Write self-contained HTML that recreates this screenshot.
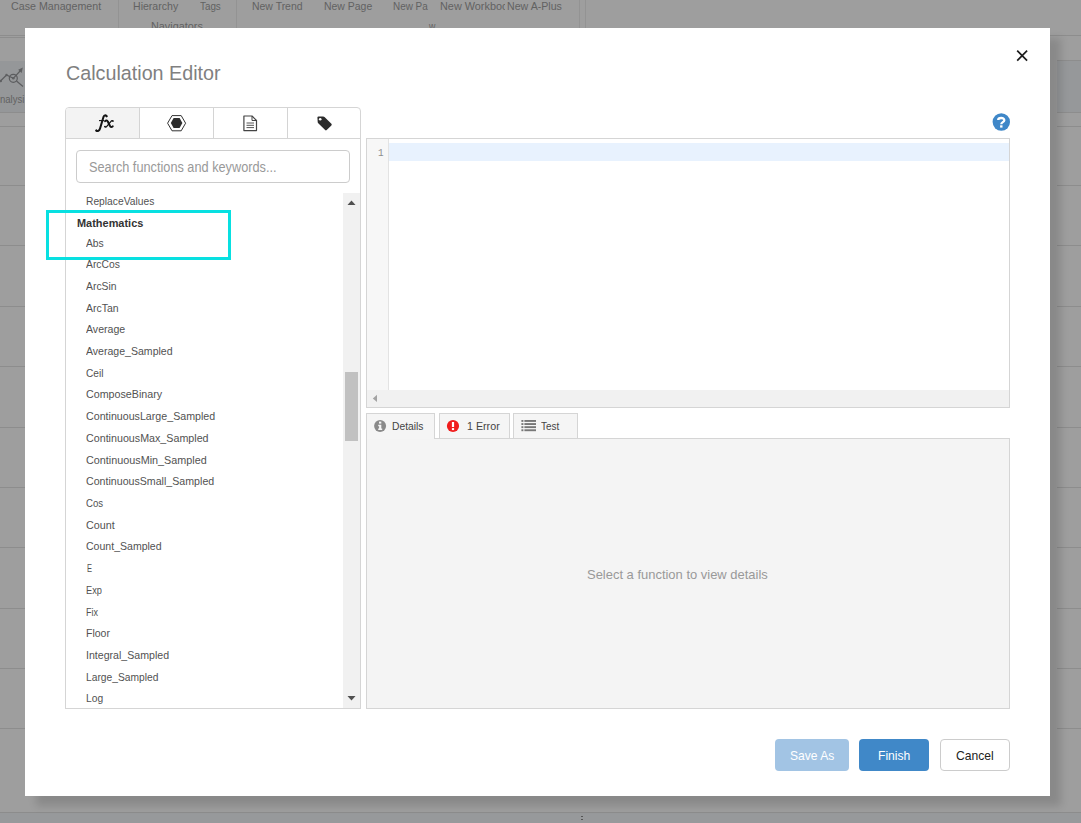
<!DOCTYPE html>
<html>
<head>
<meta charset="utf-8">
<title>Calculation Editor</title>
<style>
html,body{margin:0;padding:0;}
body{width:1081px;height:823px;overflow:hidden;background:#9e9e9e;font-family:"Liberation Sans",sans-serif;position:relative;}
.a{position:absolute;}
.t{position:absolute;white-space:nowrap;line-height:normal;transform-origin:0 0;}
.vl{position:absolute;width:1px;background:#939393;top:0;height:28px;}
.hl{position:absolute;height:1px;background:#8d8d8d;}
#modal{position:absolute;left:25px;top:28px;width:1025px;height:768px;background:#fff;box-shadow:11px 10px 8px 0 rgba(0,0,0,.135);}
.bd{border:1px solid #d5d5d5;box-sizing:border-box;}
</style>
</head>
<body>
<!-- dimmed background application -->
<div class="a" style="left:0;top:61px;width:25px;height:51px;background:#959799;"></div>
<div class="a" style="left:1057px;top:60px;width:24px;height:52px;background:#96989a;"></div>
<div class="a" style="left:0;top:813px;width:1081px;height:10px;background:#97999b;"></div>
<div class="vl" style="left:118px;"></div>
<div class="vl" style="left:236px;"></div>
<div class="vl" style="left:579px;"></div>
<div class="vl" style="left:585px;"></div>
<div class="hl" style="left:0;top:35px;width:25px;"></div><div class="hl" style="left:1050px;top:35px;width:31px;"></div>
<div class="hl" style="left:0;top:37px;width:25px;"></div>
<div class="hl" style="left:1057px;top:60px;width:24px;"></div>
<div class="hl" style="left:0;top:112px;width:25px;"></div><div class="hl" style="left:1057px;top:112px;width:24px;"></div>
<div class="hl" style="left:0;top:126px;width:25px;"></div><div class="hl" style="left:1057px;top:126px;width:24px;"></div>
<div class="hl" style="left:0;top:185px;width:25px;"></div><div class="hl" style="left:1057px;top:185px;width:24px;"></div>
<div class="hl" style="left:0;top:245px;width:25px;"></div><div class="hl" style="left:1057px;top:245px;width:24px;"></div>
<div class="hl" style="left:0;top:306px;width:25px;"></div><div class="hl" style="left:1057px;top:306px;width:24px;"></div>
<div class="hl" style="left:0;top:366px;width:25px;"></div><div class="hl" style="left:1057px;top:366px;width:24px;"></div>
<div class="hl" style="left:0;top:427px;width:25px;"></div><div class="hl" style="left:1057px;top:427px;width:24px;"></div>
<div class="hl" style="left:0;top:487px;width:25px;"></div><div class="hl" style="left:1057px;top:487px;width:24px;"></div>
<div class="hl" style="left:0;top:547px;width:25px;"></div><div class="hl" style="left:1057px;top:547px;width:24px;"></div>
<div class="hl" style="left:0;top:608px;width:25px;"></div><div class="hl" style="left:1057px;top:608px;width:24px;"></div>
<div class="hl" style="left:0;top:668px;width:25px;"></div><div class="hl" style="left:1057px;top:668px;width:24px;"></div>
<div class="hl" style="left:0;top:728px;width:25px;"></div><div class="hl" style="left:1057px;top:728px;width:24px;"></div>
<div class="hl" style="left:0;top:812px;width:1081px;background:#8c8c8c;"></div>
<div class="a" style="left:581px;top:816px;width:2px;height:1px;background:#555;"></div>
<div class="a" style="left:581px;top:819px;width:2px;height:1px;background:#555;"></div>
<div class="t" style='left:11.10px;top:-0.40px;font-size:11.3px;color:#626262;transform:scaleX(0.9448);'>Case Management</div>
<div class="t" style='left:133.00px;top:-0.40px;font-size:11.3px;color:#626262;transform:scaleX(0.9347);'>Hierarchy</div>
<div class="t" style='left:199.60px;top:-0.40px;font-size:11.3px;color:#626262;transform:scaleX(0.8708);'>Tags</div>
<div class="t" style='left:150.50px;top:19.60px;font-size:11.3px;color:#626262;transform:scaleX(0.9593);'>Navigators</div>
<div class="t" style='left:252.30px;top:-0.40px;font-size:11.3px;color:#626262;transform:scaleX(0.9255);'>New Trend</div>
<div class="t" style='left:324.40px;top:-0.40px;font-size:11.3px;color:#626262;transform:scaleX(0.9250);'>New Page</div>
<div class="t" style='left:393.30px;top:-0.40px;font-size:11.3px;color:#626262;transform:scaleX(0.8775);'>New Pa</div>
<div class="t" style='left:439.50px;top:-0.40px;font-size:11.3px;color:#626262;transform:scaleX(0.9615);'>New Workbo<span style="position:absolute;left:100%;">ok</span></div>
<div class="a" style="left:505px;top:0;width:70px;height:28px;background:#9e9e9e;"></div>
<div class="t" style='left:507.00px;top:-0.40px;font-size:11.3px;color:#626262;transform:scaleX(0.9407);'>New A-Plus</div>
<div class="t" style='left:0.00px;top:92.80px;font-size:11.3px;color:#626262;transform:scaleX(0.8448);'>nalysi</div>
<div class="t" style='left:429.40px;top:20.20px;font-size:11.3px;color:#626262;transform:scaleX(0.7778);'>w</div>
<svg class="a" style="left:0;top:64px;" width="25" height="26" viewBox="0 64 25 26">
  <g fill="none" stroke="#5c5d5f" stroke-width="1.2">
    <polyline points="0.5,81 6.5,75 13.3,78.3 21,70"/>
    <circle cx="13.3" cy="78.3" r="4"/>
    <line x1="16.5" y1="81" x2="23" y2="86.5"/>
  </g>
  <g fill="#5f6062"><circle cx="6.5" cy="75" r="1.2"/><circle cx="13.3" cy="78.3" r="1.3"/><circle cx="0.8" cy="81" r="1.2"/><polygon points="22.8,67.6 18.2,69.8 21.6,73"/></g>
</svg>

<!-- modal -->
<div id="modal"></div>
<svg class="a" style="left:1014px;top:48px;" width="16" height="16" viewBox="0 0 16 16"><path d="M3.2 2.6 L13.1 12.7 M13.1 2.6 L3.2 12.7" stroke="#1c1c1c" stroke-width="1.7" fill="none"/></svg>

<!-- left tabs -->
<div class="a bd" style="left:65px;top:107px;width:296px;height:32px;border-radius:4px 4px 0 0;background:#fff;"></div>
<div class="a" style="left:66px;top:108px;width:73px;height:30px;background:#f3f3f3;border-radius:3px 0 0 0;"></div>
<div class="a" style="left:139px;top:108px;width:1px;height:30px;background:#d4d4d4;"></div>
<div class="a" style="left:213px;top:108px;width:1px;height:30px;background:#d4d4d4;"></div>
<div class="a" style="left:287px;top:108px;width:1px;height:30px;background:#d4d4d4;"></div>
<!-- fx icon -->
<svg class="a" style="left:94px;top:113px;" width="22" height="21" viewBox="94 113 22 21">
  <g fill="none" stroke="#151515" stroke-linecap="round" stroke-linejoin="round">
    <path d="M106.6 116.3 C106.5 114.9 104.2 114.7 103.5 116.9 L100.0 128.6 C99.3 130.9 97.5 131.5 96.3 130.6" stroke-width="1.95"/>
    <path d="M99 120.6 H104.1" stroke-width="1.1" stroke-linecap="butt"/>
    <path d="M105.1 121.2 C106 120.1 107.3 120.2 107.8 121.5 L110 126 C110.5 127.3 111.7 127.4 112.7 126.3" stroke-width="2"/>
    <path d="M113 121.1 C112.4 120.3 111.7 120.5 111 121.3 L106.8 126.3 C106 127.3 105.3 127.3 104.8 126.6" stroke-width="1.25"/>
  </g>
  <g fill="#151515"><circle cx="106.5" cy="116.3" r="1"/><circle cx="96.4" cy="130.5" r="1"/><circle cx="112.9" cy="121.1" r="0.8"/><circle cx="105" cy="126.6" r="0.8"/></g>
</svg>
<!-- hexagon icon -->
<svg class="a" style="left:166px;top:114px;" width="22" height="18" viewBox="166 114 22 18">
  <polygon points="167.6,123.2 172,115.6 181.2,115.6 185.6,123.2 181.2,130.8 172,130.8" fill="none" stroke="#333" stroke-width="1"/>
  <polygon points="170.8,123.1 173.6,118.1 179.6,118.1 182.4,123.1 179.6,128.1 173.6,128.1" fill="#2e2e2e"/>
</svg>
<!-- file-text-o icon -->
<svg class="a" style="left:242px;top:114px;" width="17" height="19" viewBox="242 114 17 19">
  <path d="M243.9 116 H252 L256.5 120.5 V130.6 H243.9 Z" fill="none" stroke="#444" stroke-width="1.2" stroke-linejoin="round"/>
  <path d="M252 116 V120.5 H256.5" fill="none" stroke="#444" stroke-width="1"/>
  <path d="M246.5 123 H254 M246.5 125.3 H254 M246.5 127.6 H254" stroke="#555" stroke-width="1"/>
</svg>
<!-- tag icon -->
<svg class="a" style="left:315.5px;top:115.4px;" width="18" height="17" viewBox="315 115 18 17">
  <path d="M316.4 117.6 a1.2 1.2 0 0 1 1.2 -1.2 h4.6 a2 2 0 0 1 1.3 .55 l6.9 6.9 a1.1 1.1 0 0 1 0 1.55 l-4.7 4.7 a1.1 1.1 0 0 1 -1.55 0 l-6.9 -6.9 a2 2 0 0 1 -.55 -1.3 z" fill="#2b2b2b"/>
  <circle cx="319.2" cy="119.2" r="1.3" fill="#fff"/>
</svg>

<!-- left panel -->
<div class="a bd" style="left:65px;top:138px;width:296px;height:571px;background:#fff;"></div>
<div class="a" style="left:76px;top:150px;width:274px;height:33px;border:1px solid #ccc;border-radius:4px;box-sizing:border-box;background:#fff;"></div>
<!-- scrollbar -->
<div class="a" style="left:343px;top:193px;width:17px;height:515px;background:#f1f1f1;"></div>
<div class="a" style="left:345px;top:372px;width:13px;height:69px;background:#c1c1c1;"></div>
<svg class="a" style="left:347px;top:199.7px;" width="9" height="6"><polygon points="4.5,0.5 8.5,5 0.5,5" fill="#505050"/></svg>
<svg class="a" style="left:347px;top:695px;" width="9" height="6"><polygon points="0.5,1 8.5,1 4.5,5.5" fill="#505050"/></svg>

<!-- editor -->
<div class="a bd" style="left:366px;top:138px;width:644px;height:270px;background:#fff;"></div>
<div class="a" style="left:367px;top:139px;width:21px;height:251px;background:#f7f7f7;"></div>
<div class="a" style="left:388px;top:139px;width:1px;height:251px;background:#e3e3e3;"></div>
<div class="a" style="left:389px;top:143px;width:620px;height:18px;background:#e8f2fe;"></div>
<div class="a" style="left:367px;top:390px;width:642px;height:17px;background:#f1f1f1;"></div>
<svg class="a" style="left:372px;top:394px;" width="6" height="9"><polygon points="5,0.8 5,8 0.8,4.4" fill="#a3a3a3"/></svg>

<!-- help icon -->
<svg class="a" style="left:991px;top:112px;" width="20" height="20" viewBox="0 0 20 20">
  <circle cx="10.3" cy="10" r="8.7" fill="#3f87c8"/>
  <path d="M7.2 8.1 C7.2 5.4 13.3 5.2 13.3 8.2 C13.3 10.2 10.3 10.1 10.3 12.2" fill="none" stroke="#fff" stroke-width="2.3"/>
  <rect x="9.1" y="13.3" width="2.4" height="2.3" fill="#fff"/>
</svg>

<!-- bottom tabs / detail panel -->
<div class="a bd" style="left:366px;top:438px;width:644px;height:271px;background:#f4f4f4;"></div>
<div class="a bd" style="left:366px;top:413px;width:69px;height:26px;border-bottom:none;background:#f5f5f5;"></div>
<div class="a bd" style="left:439px;top:413px;width:71px;height:26px;background:#f5f5f5;"></div>
<div class="a bd" style="left:513px;top:413px;width:65px;height:26px;background:#f5f5f5;"></div>
<svg class="a" style="left:373px;top:419px;" width="14" height="14" viewBox="0 0 14 14">
  <circle cx="7.1" cy="7" r="6" fill="#8a8a8a"/>
  <rect x="6" y="2.6" width="2.3" height="2" fill="#f5f5f5"/>
  <path d="M5.2 5.8 H8.3 V9.6 H9.2 V11 H5.2 V9.6 H6.1 V7.2 H5.2 Z" fill="#f5f5f5"/>
</svg>
<svg class="a" style="left:446px;top:419px;" width="14" height="14" viewBox="0 0 14 14">
  <circle cx="7" cy="7" r="6.1" fill="#f01c1c"/>
  <rect x="5.9" y="3" width="2.2" height="5" fill="#fff"/>
  <rect x="5.9" y="9.1" width="2.2" height="2" fill="#fff"/>
</svg>
<svg class="a" style="left:521px;top:419px;" width="16" height="13" viewBox="0 0 16 13">
  <g fill="#777">
  <rect x="0.4" y="1" width="2" height="1.9"/><rect x="3.4" y="1" width="11.6" height="1.9"/>
  <rect x="0.4" y="4.1" width="2" height="1.9"/><rect x="3.4" y="4.1" width="11.6" height="1.9"/>
  <rect x="0.4" y="7.2" width="2" height="1.9"/><rect x="3.4" y="7.2" width="11.6" height="1.9"/>
  <rect x="0.4" y="10.3" width="2" height="1.9"/><rect x="3.4" y="10.3" width="11.6" height="1.9"/>
  </g>
</svg>

<!-- buttons -->
<div class="a" style="left:775px;top:739px;width:74px;height:32px;border-radius:4px;background:#a2c4e4;"></div>
<div class="a" style="left:859px;top:739px;width:70px;height:32px;border-radius:4px;background:#4088c8;"></div>
<div class="a" style="left:940px;top:739px;width:70px;height:32px;border-radius:4px;background:#fff;border:1px solid #ccc;box-sizing:border-box;"></div>

<div class="t" style='left:65.80px;top:61.00px;font-size:20.5px;color:#808080;transform:scaleX(0.9621);'>Calculation Editor</div>
<div class="t" style='left:89.30px;top:158.70px;font-size:14px;color:#999;transform:scaleX(0.9093);'>Search functions and keywords...</div>
<div class="t" style='left:86.35px;top:195.20px;font-size:11px;color:#525252;transform:scaleX(0.9329);'>ReplaceValues</div>
<div class="t" style='left:76.60px;top:217.40px;font-size:11px;color:#333;transform:scaleX(0.9955);font-weight:700;'>Mathematics</div>
<div class="t" style='left:86.30px;top:236.50px;font-size:11px;color:#525252;transform:scaleX(0.9368);'>Abs</div>
<div class="t" style='left:86.30px;top:258.21px;font-size:11px;color:#525252;transform:scaleX(0.9389);'>ArcCos</div>
<div class="t" style='left:86.30px;top:279.92px;font-size:11px;color:#525252;transform:scaleX(0.9437);'>ArcSin</div>
<div class="t" style='left:86.30px;top:301.63px;font-size:11px;color:#525252;transform:scaleX(0.9500);'>ArcTan</div>
<div class="t" style='left:86.30px;top:323.34px;font-size:11px;color:#525252;transform:scaleX(0.9610);'>Average</div>
<div class="t" style='left:86.30px;top:345.05px;font-size:11px;color:#525252;transform:scaleX(0.9589);'>Average_Sampled</div>
<div class="t" style='left:86.30px;top:366.76px;font-size:11px;color:#525252;transform:scaleX(0.9211);'>Ceil</div>
<div class="t" style='left:86.30px;top:388.47px;font-size:11px;color:#525252;transform:scaleX(0.9731);'>ComposeBinary</div>
<div class="t" style='left:86.30px;top:410.18px;font-size:11px;color:#525252;transform:scaleX(0.9692);'>ContinuousLarge_Sampled</div>
<div class="t" style='left:86.30px;top:431.89px;font-size:11px;color:#525252;transform:scaleX(0.9730);'>ContinuousMax_Sampled</div>
<div class="t" style='left:86.30px;top:453.60px;font-size:11px;color:#525252;transform:scaleX(0.9821);'>ContinuousMin_Sampled</div>
<div class="t" style='left:86.30px;top:475.31px;font-size:11px;color:#525252;transform:scaleX(0.9662);'>ContinuousSmall_Sampled</div>
<div class="t" style='left:86.30px;top:497.02px;font-size:11px;color:#525252;transform:scaleX(0.8750);'>Cos</div>
<div class="t" style='left:86.30px;top:518.73px;font-size:11px;color:#525252;transform:scaleX(0.9767);'>Count</div>
<div class="t" style='left:86.30px;top:540.44px;font-size:11px;color:#525252;transform:scaleX(0.9582);'>Count_Sampled</div>
<div class="t" style='left:86.80px;top:562.15px;font-size:11px;color:#525252;transform:scaleX(0.6857);'>E</div>
<div class="t" style='left:86.30px;top:583.86px;font-size:11px;color:#525252;transform:scaleX(0.8421);'>Exp</div>
<div class="t" style='left:86.30px;top:605.57px;font-size:11px;color:#525252;transform:scaleX(0.8200);'>Fix</div>
<div class="t" style='left:86.30px;top:627.28px;font-size:11px;color:#525252;transform:scaleX(0.9560);'>Floor</div>
<div class="t" style='left:86.30px;top:648.99px;font-size:11px;color:#525252;transform:scaleX(0.9640);'>Integral_Sampled</div>
<div class="t" style='left:86.30px;top:670.70px;font-size:11px;color:#525252;transform:scaleX(0.9321);'>Large_Sampled</div>
<div class="t" style='left:86.30px;top:692.41px;font-size:11px;color:#525252;transform:scaleX(0.9333);'>Log</div>
<div class="t" style='left:391.90px;top:420.00px;font-size:11.3px;color:#444;transform:scaleX(0.9114);'>Details</div>
<div class="t" style='left:466.55px;top:420.00px;font-size:11.3px;color:#444;transform:scaleX(0.9471);'>1 Error</div>
<div class="t" style='left:541.00px;top:419.90px;font-size:11.3px;color:#444;transform:scaleX(0.8762);'>Test</div>
<div class="t" style='left:586.70px;top:566.50px;font-size:13.5px;color:#999;transform:scaleX(0.9596);'>Select a function to view details</div>
<div class="t" style='left:790.30px;top:747.90px;font-size:13.2px;color:#fff;transform:scaleX(0.9146);'>Save As</div>
<div class="t" style='left:878.30px;top:747.80px;font-size:13.2px;color:#fff;transform:scaleX(0.9200);'>Finish</div>
<div class="t" style='left:955.70px;top:747.80px;font-size:13.2px;color:#222;transform:scaleX(0.9195);'>Cancel</div>
<div class="t" style='left:377.60px;top:147.40px;font-size:11.4px;color:#8c8c8c;transform:scaleX(0.8143);font-family:"Liberation Mono",monospace;'>1</div>

<!-- highlight box -->
<div class="a" style="left:46px;top:210px;width:185px;height:50px;border:3px solid #08e0e1;box-sizing:border-box;"></div>
</body>
</html>
